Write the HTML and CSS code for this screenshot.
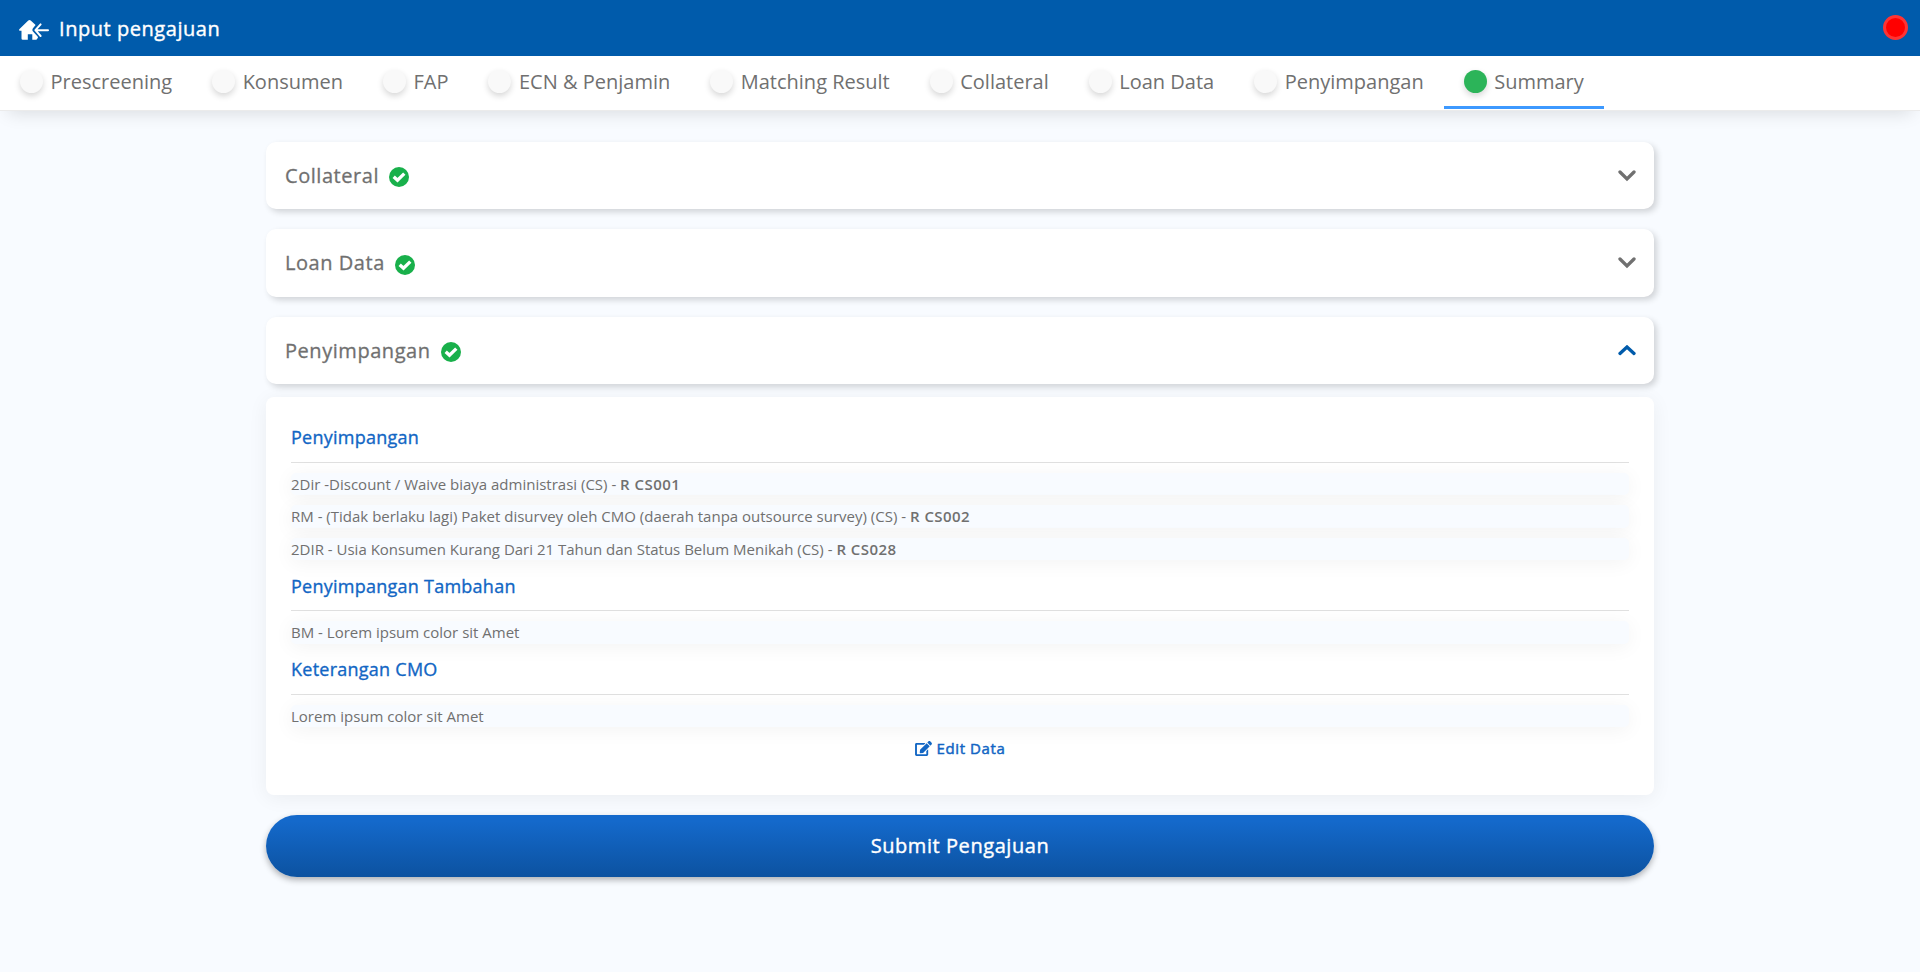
FILE: index.html
```html
<!DOCTYPE html>
<html lang="id">
<head>
<meta charset="utf-8">
<title>Input pengajuan</title>
<link rel="stylesheet" href="styles.css">
</head>
<body>
<header class="topbar">
  <svg class="home" viewBox="0 0 30 20" width="30" height="20" fill="#fff" aria-hidden="true">
    <path d="M9.300 .6 Q10.500 -.4 11.700 .6 L16.600 5 L13.800 8.600 Q13 9.900 13.800 11.200 L18.600 16.500 Q19.500 18 18 18.800 L17.500 19.800 H13.300 V14.200 H8.800 V19.800 H3.800 Q2.500 19.800 2.500 18.500 V10.800 H.8 Q-.5 10.300 .5 9.100 Z"/>
    <path d="M21.600 4.400 L16.400 10.200 L21.600 16 M16.800 10.200 H29" fill="none" stroke="#fff" stroke-width="2" stroke-linecap="round" stroke-linejoin="round"/>
  </svg>
  <h1 class="title">Input pengajuan</h1>
  <span class="status"></span>
</header>
<nav class="steps">
  <a class="step"><span class="dot"></span>Prescreening</a>
  <a class="step"><span class="dot"></span>Konsumen</a>
  <a class="step"><span class="dot"></span>FAP</a>
  <a class="step"><span class="dot"></span>ECN &amp; Penjamin</a>
  <a class="step"><span class="dot"></span>Matching Result</a>
  <a class="step"><span class="dot"></span>Collateral</a>
  <a class="step"><span class="dot"></span>Loan Data</a>
  <a class="step"><span class="dot"></span>Penyimpangan</a>
  <a class="step active"><span class="dot"></span>Summary</a>
</nav>
<main class="content">
  <section class="card">
    <span class="card-title">Collateral</span>
    <svg class="check" viewBox="0 0 20 20" width="20" height="20"><circle cx="10" cy="10" r="10" fill="#19b04b"/><path d="M4.700 9.700 L8.500 13.300 L15.300 6.600" fill="none" stroke="#fff" stroke-width="3.300"/></svg>
    <svg class="chevron" viewBox="0 0 18 12" width="18" height="12"><path d="M2 2 L9 9 L16 2" fill="none" stroke="#707070" stroke-width="3.300" stroke-linecap="round"/></svg>
  </section>
  <section class="card">
    <span class="card-title">Loan Data</span>
    <svg class="check" viewBox="0 0 20 20" width="20" height="20"><circle cx="10" cy="10" r="10" fill="#19b04b"/><path d="M4.700 9.700 L8.500 13.300 L15.300 6.600" fill="none" stroke="#fff" stroke-width="3.300"/></svg>
    <svg class="chevron" viewBox="0 0 18 12" width="18" height="12"><path d="M2 2 L9 9 L16 2" fill="none" stroke="#707070" stroke-width="3.300" stroke-linecap="round"/></svg>
  </section>
  <section class="card">
    <span class="card-title">Penyimpangan</span>
    <svg class="check" viewBox="0 0 20 20" width="20" height="20"><circle cx="10" cy="10" r="10" fill="#19b04b"/><path d="M4.700 9.700 L8.500 13.300 L15.300 6.600" fill="none" stroke="#fff" stroke-width="3.300"/></svg>
    <svg class="chevron" viewBox="0 0 18 12" width="18" height="12"><path d="M2 8.500 L9 2 L16 8.500" fill="none" stroke="#005bab" stroke-width="3.300" stroke-linecap="round"/></svg>
  </section>
  <section class="panel">
    <h2 class="heading">Penyimpangan</h2>
    <ul class="rows">
      <li class="row">2Dir -Discount / Waive biaya administrasi (CS) - <b>R CS001</b></li>
      <li class="row">RM - (Tidak berlaku lagi) Paket disurvey oleh CMO (daerah tanpa outsource survey) (CS) - <b>R CS002</b></li>
      <li class="row">2DIR - Usia Konsumen Kurang Dari 21 Tahun dan Status Belum Menikah (CS) - <b>R CS028</b></li>
    </ul>
    <h2 class="heading">Penyimpangan Tambahan</h2>
    <ul class="rows">
      <li class="row">BM - Lorem ipsum color sit Amet</li>
    </ul>
    <h2 class="heading">Keterangan CMO</h2>
    <ul class="rows">
      <li class="row">Lorem ipsum color sit Amet</li>
    </ul>
    <a class="edit">
      <svg viewBox="0 0 576 512" width="17" height="15" fill="#1266c4" aria-hidden="true"><path d="M402.600 83.200l90.200 90.200c3.800 3.800 3.800 10 0 13.800L274.400 405.600l-92.800 10.300c-12.400 1.400-22.900-9.100-21.500-21.500l10.300-92.800L388.800 83.200c3.800-3.800 10-3.800 13.800 0zm162-22.900l-48.800-48.800c-15.200-15.200-39.900-15.200-55.200 0l-35.400 35.400c-3.800 3.800-3.800 10 0 13.800l90.200 90.200c3.800 3.800 10 3.800 13.800 0l35.400-35.400c15.200-15.300 15.200-40 0-55.200zM384 346.200V448H64V128h229.800c3.200 0 6.200-1.300 8.500-3.500l40-40c7.600-7.600 2.200-20.500-8.500-20.500H48C21.500 64 0 85.500 0 112v352c0 26.500 21.500 48 48 48h352c26.500 0 48-21.500 48-48V306.200c0-10.700-12.900-16-20.500-8.500l-40 40c-2.200 2.300-3.500 5.300-3.500 8.500z"/></svg>
      Edit Data
    </a>
  </section>
  <button class="submit">Submit Pengajuan</button>
</main>
</body>
</html>
```
FILE: styles.css
```css
* { box-sizing: border-box; }

body {
  margin: 0;
  min-height: 972px;
  background: #f8fbff;
  color: #707070;
  font-family: "Open Sans", "Noto Sans", sans-serif;
}

.topbar {
  display: flex;
  align-items: center;
  height: 56px;
  padding: 0 12px 0 19px;
  background: #005bab;
  color: #fff;
}
.home { margin-top: 4px; }
.title {
  margin: 2px 0 0 10px;
  font-size: 20px;
  font-weight: 400;
  letter-spacing: .55px;
  line-height: 30px;
  -webkit-text-stroke: .4px;
}
.status {
  width: 25px;
  height: 25px;
  margin: -1px 0 0 auto;
  border: 3px solid #ff3333;
  border-radius: 50%;
  background: #f00;
}

.steps {
  display: flex;
  height: 55px;
  border-bottom: 1px solid #ebebeb;
  background: #fff;
  box-shadow: 0 10px 18px -8px rgba(0, 0, 0, .13);
}
.step {
  display: flex;
  align-items: center;
  height: 53px;
  padding: 2px 20px 0;
  border-bottom: 3px solid transparent;
  font-size: 20px;
  line-height: 30px;
  white-space: nowrap;
}
.step.active { border-bottom-color: #3d99ff; }
.dot {
  width: 23px;
  height: 23px;
  margin: -1px 7.500px 0 0;
  border-radius: 50%;
  background: #f9f9f9;
  box-shadow: 0 3px 6px rgba(0, 0, 0, .16);
}
.active .dot { background: #2cb459; }

.content {
  width: 1388px;
  margin: 0 auto;
  padding-top: 30.900px;
}
.card {
  display: flex;
  align-items: center;
  height: 67.5px;
  margin-bottom: 20px;
  padding: 0 18px 0 19px;
  border-radius: 10px;
  background: #fff;
  box-shadow: 3px 3px 6px rgba(0, 0, 0, .16);
}
.card-title {
  font-size: 20px;
  font-weight: 400;
  letter-spacing: .55px;
  line-height: 30px;
  -webkit-text-stroke: .3px;
}
.check { margin: 3px 0 0 10px; }
.chevron { margin-left: auto; }

.panel {
  display: flex;
  flex-direction: column;
  height: 398px;
  margin-top: -7.400px;
  padding: 24.900px 25px 0;
  border-radius: 8px;
  background: #fff;
  box-shadow: 0 3px 20px rgba(0, 0, 0, .06);
}
.heading {
  height: 41px;
  margin: 0 0 10px;
  padding-top: 2.400px;
  border-bottom: 1px solid #e0e0e0;
  color: #1266c4;
  font-size: 18px;
  font-weight: 400;
  letter-spacing: .25px;
  line-height: 27px;
  -webkit-text-stroke: .35px;
}
.rows {
  margin: 0;
  padding: 0;
  list-style: none;
}
.row {
  height: 22.500px;
  margin-bottom: 10px;
  border-radius: 5px;
  background: #f8fbff;
  box-shadow: 0 3px 20px rgba(0, 0, 0, .05);
  font-size: 15px;
  line-height: 22.500px;
}
.row b {
  font-weight: 600;
  letter-spacing: .45px;
}
.edit {
  display: flex;
  align-items: center;
  align-self: center;
  gap: 5px;
  color: #1266c4;
  font-size: 15px;
  font-weight: 400;
  letter-spacing: .6px;
  line-height: 22px;
  -webkit-text-stroke: .5px;
}
.submit {
  display: block;
  width: 100%;
  height: 62px;
  margin-top: 20px;
  border: 0;
  border-radius: 31px;
  background: linear-gradient(#1469cb 10%, #0c52a0);
  box-shadow: 0 3px 6px rgba(0, 0, 0, .3);
  color: #fff;
  font: 400 20px/30px "Open Sans", "Noto Sans", sans-serif;
  letter-spacing: .57px;
  -webkit-text-stroke: .4px;
}
```
